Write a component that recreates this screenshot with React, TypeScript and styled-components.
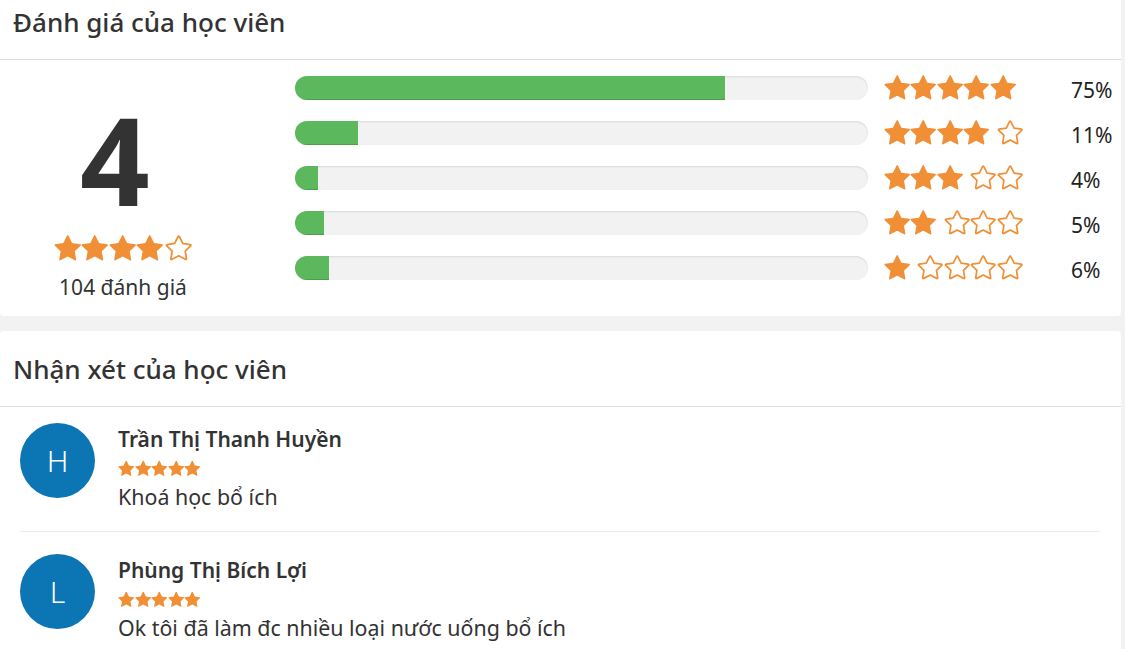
import React from "react";
import styled, { createGlobalStyle } from "styled-components";

const GlobalStyle = createGlobalStyle`
    body {
        margin: 0;
        background: #f2f2f2;
        font-family: "Noto Sans", "Open Sans", sans-serif;
        color: #333;
    }
`;

const STAR_PATH =
    "M1664 615q0 22-26 48l-363 354 86 500q1 7 1 20 0 21-10.5 35.5t-30.5 14.5q-19 0-40-12l-449-236-449 236q-21 12-40 12-21 0-31.5-14.5t-10.5-35.5q0-6 2-20l86-500-364-354q-25-27-25-48 0-37 56-46l502-73 225-455q19-41 49-41t49 41l225 455 502 73q56 9 56 46z";

const ORANGE = "#f08f35";

// data
const distribution = [
    { stars: 5, percent: 75 },
    { stars: 4, percent: 11 },
    { stars: 3, percent: 4 },
    { stars: 2, percent: 5 },
    { stars: 1, percent: 6 },
];

const reviews = [
    { initial: "H", name: "Trần Thị Thanh Huyền", comment: "Khoá học bổ ích" },
    { initial: "L", name: "Phùng Thị Bích Lợi", comment: "Ok tôi đã làm đc nhiều loại nước uống bổ ích" },
];

// layout
const Page = styled.div`
    width: 1121px;
    margin-top: -16px;
`;

const Panel = styled.section<{ $gap?: boolean }>`
    background: #fff;
    border-radius: 4px;
    margin-bottom: ${({ $gap }) => ($gap ? "15px" : "0")};
`;

const PanelHeader = styled.h2`
    margin: 0;
    height: 75px;
    display: flex;
    align-items: center;
    padding: 0 13px;
    font-size: 26px;
    font-weight: 500;
    color: #333;
    border-bottom: 1px solid #dcdcdc;
`;

const Summary = styled.div`
    display: flex;
    padding: 5px 0 14px;
`;

const Average = styled.div`
    width: 246px;
    display: flex;
    flex-direction: column;
    align-items: center;
`;

const BigScore = styled.div`
    font-size: 122px;
    font-weight: 700;
    line-height: 1;
    color: #333;
    margin-top: 33px;
    margin-left: -16px;
    margin-bottom: 14px;
`;

const AverageCount = styled.div`
    font-size: 21px;
    line-height: 29px;
    color: #333;
    margin-top: 12px;
`;

const Distribution = styled.div`
    margin-left: 49px;
    display: grid;
    grid-template-columns: 573px 203px 1fr;
    grid-auto-rows: 45px;
    align-items: center;
`;

const Track = styled.div`
    height: 24px;
    border-radius: 12px;
    background: #f2f2f2;
    box-shadow: inset 0 1px 2px rgba(0, 0, 0, 0.1);
    overflow: hidden;
`;

const Fill = styled.div`
    height: 100%;
    background: #5cb85c;
    box-shadow: inset 0 -1px 0 rgba(0, 0, 0, 0.15);
`;

const StarRow = styled.div<{ $size: number; $split: number; $indent?: boolean }>`
    display: flex;
    align-items: center;
    padding-left: ${({ $indent }) => ($indent ? "16px" : "0")};

    svg {
        width: ${({ $size }) => $size}px;
        height: ${({ $size }) => $size}px;
        flex: none;
    }

    .gap {
        width: ${({ $split }) => $split}px;
        flex: none;
    }
`;

const Percent = styled.div`
    font-size: 21px;
    color: #222;
    padding-top: 5px;
`;

const ReviewList = styled.div`
    padding: 0 21px 0 20px;
`;

const Review = styled.div`
    display: flex;
    gap: 23px;
    padding: 22px 0 20px;
    border-bottom: 1px solid #ebebeb;

    &:first-child {
        padding-top: 16px;
    }

    &:last-child {
        border-bottom: none;
    }
`;

const Avatar = styled.div`
    width: 75px;
    height: 75px;
    border-radius: 50%;
    background: #0c75b4;
    color: #fff;
    font-size: 30px;
    font-weight: 300;
    display: flex;
    align-items: center;
    justify-content: center;
    flex: none;
`;

const ReviewBody = styled.div`
    margin-top: 2px;
    display: flex;
    flex-direction: column;
`;

const ReviewName = styled.div`
    font-size: 21px;
    font-weight: 600;
    line-height: 28px;
    color: #333;
`;

const ReviewComment = styled.div`
    font-size: 21.4px;
    line-height: 28px;
    color: #333;
`;

const SmallStars = styled.div`
    display: flex;
    height: 30px;
    align-items: center;

    svg {
        width: 16.5px;
        height: 16.5px;
    }
`;

const Star = ({ filled }: { filled: boolean }) => (
    <svg viewBox="-25 -70 1714 1714">
        <path
            d={STAR_PATH}
            fill={filled ? ORANGE : "#fff"}
            stroke={filled ? "none" : ORANGE}
            strokeWidth={filled ? 0 : 120}
            strokeLinejoin="round"
            transform={filled ? undefined : "translate(832 800) scale(0.92) translate(-832 -800)"}
        />
    </svg>
);

const Stars = ({ count, size, split, indent }: { count: number; size: number; split: number; indent?: boolean }) => (
    <StarRow $size={size} $split={split} $indent={indent}>
        {Array.from({ length: count }).map((_, i) => (
            <Star key={`f${i}`} filled />
        ))}
        {count < 5 && <span className="gap" />}
        {Array.from({ length: 5 - count }).map((_, i) => (
            <Star key={`e${i}`} filled={false} />
        ))}
    </StarRow>
);

export default function App() {
    return (
        <>
            <GlobalStyle />
            <Page>
                <Panel $gap>
                    <PanelHeader>Đánh giá của học viên</PanelHeader>
                    <Summary>
                        <Average>
                            <BigScore>4</BigScore>
                            <Stars count={4} size={27.4} split={1} />
                            <AverageCount>104 đánh giá</AverageCount>
                        </Average>
                        <Distribution>
                            {distribution.map((row) => (
                                <React.Fragment key={row.stars}>
                                    <Track>
                                        <Fill style={{ width: `${row.percent}%` }} />
                                    </Track>
                                    <Stars count={row.stars} size={26.4} split={7} indent />
                                    <Percent>{row.percent}%</Percent>
                                </React.Fragment>
                            ))}
                        </Distribution>
                    </Summary>
                </Panel>
                <Panel>
                    <PanelHeader>Nhận xét của học viên</PanelHeader>
                    <ReviewList>
                        {reviews.map((r) => (
                            <Review key={r.name}>
                                <Avatar>{r.initial}</Avatar>
                                <ReviewBody>
                                    <ReviewName>{r.name}</ReviewName>
                                    <SmallStars>
                                        {Array.from({ length: 5 }).map((_, i) => (
                                            <Star key={i} filled />
                                        ))}
                                    </SmallStars>
                                    <ReviewComment>{r.comment}</ReviewComment>
                                </ReviewBody>
                            </Review>
                        ))}
                    </ReviewList>
                </Panel>
            </Page>
        </>
    );
}
